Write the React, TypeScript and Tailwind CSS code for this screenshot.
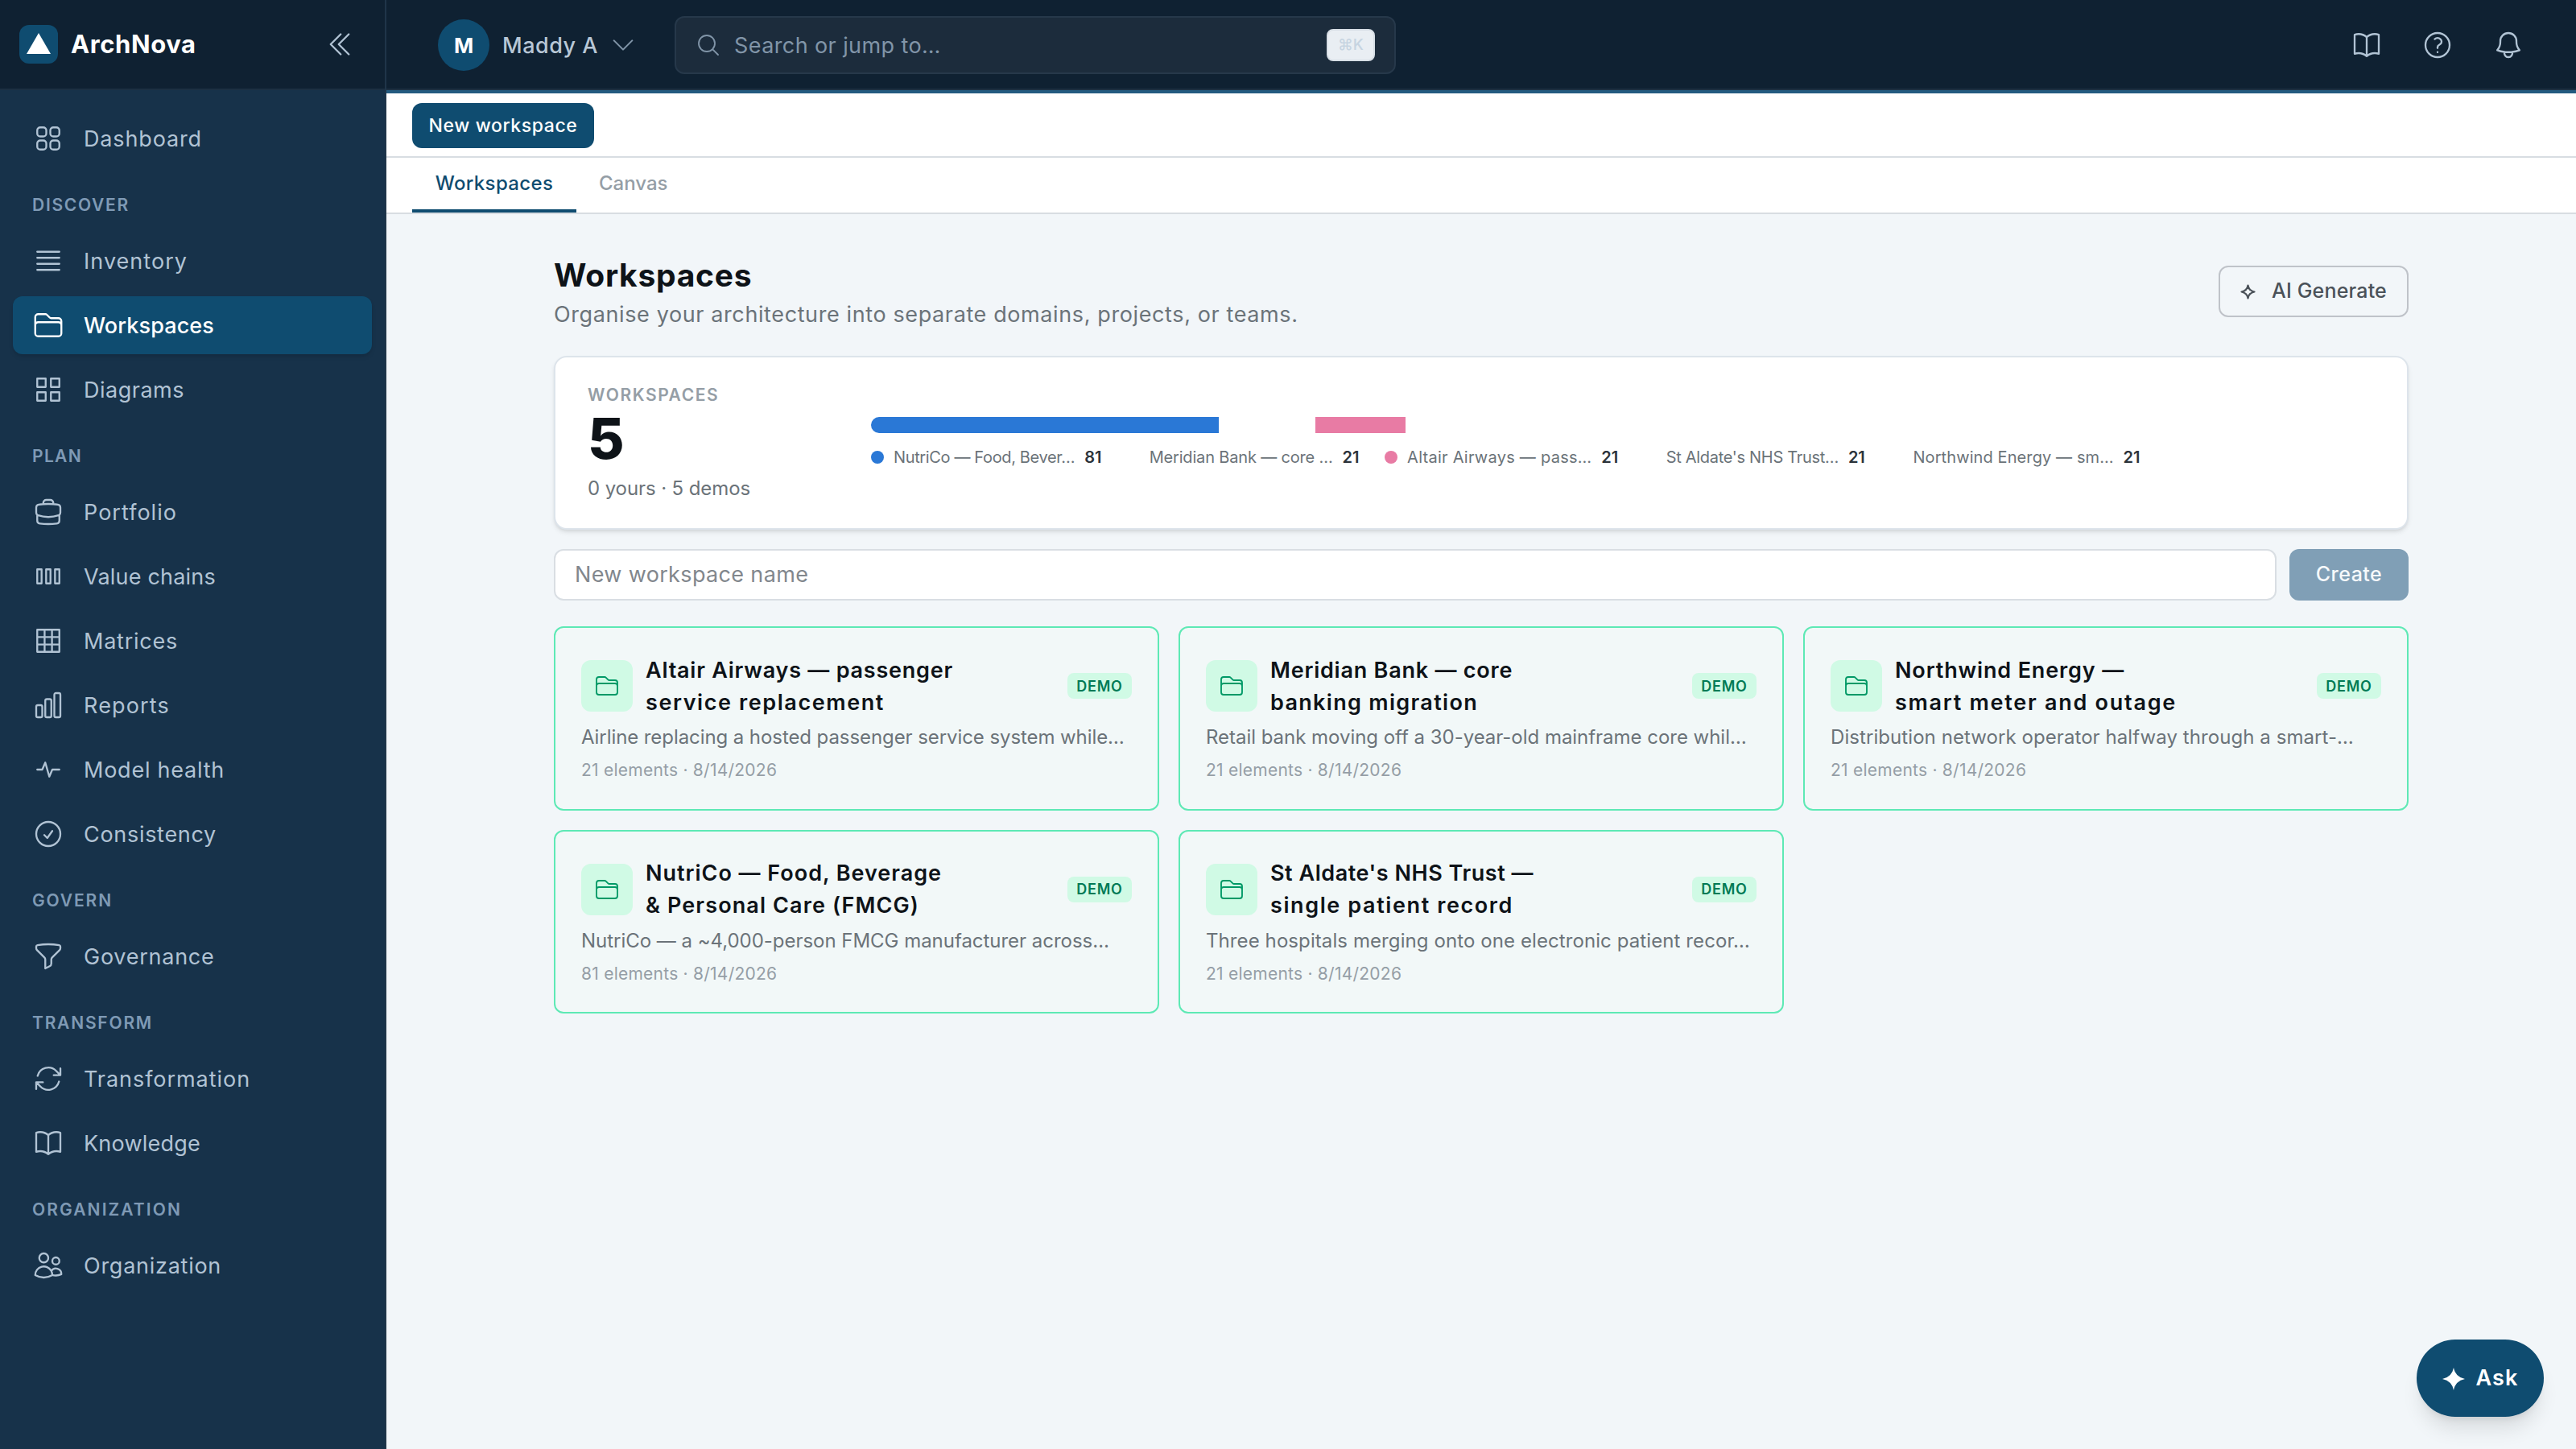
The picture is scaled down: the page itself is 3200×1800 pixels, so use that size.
const icons = {
  collapse: "m18.75 4.5-7.5 7.5 7.5 7.5m-6-15L5.25 12l7.5 7.5",
  dashboard:
    "M3.75 6A2.25 2.25 0 0 1 6 3.75h2.25A2.25 2.25 0 0 1 10.5 6v2.25a2.25 2.25 0 0 1-2.25 2.25H6a2.25 2.25 0 0 1-2.25-2.25V6ZM3.75 15.75A2.25 2.25 0 0 1 6 13.5h2.25a2.25 2.25 0 0 1 2.25 2.25V18a2.25 2.25 0 0 1-2.25 2.25H6A2.25 2.25 0 0 1 3.75 18v-2.25ZM13.5 6a2.25 2.25 0 0 1 2.25-2.25H18A2.25 2.25 0 0 1 20.25 6v2.25A2.25 2.25 0 0 1 18 10.5h-2.25a2.25 2.25 0 0 1-2.25-2.25V6ZM13.5 15.75a2.25 2.25 0 0 1 2.25-2.25H18a2.25 2.25 0 0 1 2.25 2.25V18A2.25 2.25 0 0 1 18 20.25h-2.25A2.25 2.25 0 0 1 13.5 18v-2.25Z",
  inventory: "M3.75 5.25h16.5m-16.5 4.5h16.5m-16.5 4.5h16.5m-16.5 4.5h16.5",
  folder:
    "M2.25 12.75V12A2.25 2.25 0 0 1 4.5 9.75h15A2.25 2.25 0 0 1 21.75 12v.75m-8.69-6.44-2.12-2.12a1.5 1.5 0 0 0-1.061-.44H4.5A2.25 2.25 0 0 0 2.25 6v12a2.25 2.25 0 0 0 2.25 2.25h15A2.25 2.25 0 0 0 21.75 18V9a2.25 2.25 0 0 0-2.25-2.25h-5.379a1.5 1.5 0 0 1-1.06-.44Z",
  diagrams:
    "M3.75 3.75h6.3v6.3h-6.3zM13.95 3.75h6.3v6.3h-6.3zM3.75 13.95h6.3v6.3h-6.3zM13.95 13.95h6.3v6.3h-6.3z",
  portfolio:
    "M20.25 14.15v4.25c0 1.094-.787 2.036-1.872 2.18-2.087.277-4.216.42-6.378.42s-4.291-.143-6.378-.42c-1.085-.144-1.872-1.086-1.872-2.18v-4.25m16.5 0a2.18 2.18 0 0 0 .75-1.661V8.706c0-1.081-.768-2.015-1.837-2.175a48.114 48.114 0 0 0-3.413-.387m4.5 8.006c-.194.165-.42.295-.673.38A23.978 23.978 0 0 1 12 15.75c-2.648 0-5.195-.429-7.577-1.22a2.016 2.016 0 0 1-.673-.38m0 0A2.18 2.18 0 0 1 3 12.489V8.706c0-1.081.768-2.015 1.837-2.175a48.111 48.111 0 0 1 3.413-.387m7.5 0V5.25A2.25 2.25 0 0 0 13.5 3h-3a2.25 2.25 0 0 0-2.25 2.25v.894m7.5 0a48.667 48.667 0 0 0-7.5 0",
  chains: "M3.75 6.75H7v10.5H3.75zM10.375 6.75h3.25v10.5h-3.25zM17 6.75h3.25v10.5H17z",
  matrices: "M3.75 3.75h16.5v16.5H3.75zM3.75 9.25h16.5M3.75 14.75h16.5M9.25 3.75v16.5M14.75 3.75v16.5",
  reports:
    "M3 13.125C3 12.504 3.504 12 4.125 12h2.25c.621 0 1.125.504 1.125 1.125v6.75C7.5 20.496 6.996 21 6.375 21h-2.25A1.125 1.125 0 0 1 3 19.875v-6.75ZM9.75 8.625c0-.621.504-1.125 1.125-1.125h2.25c.621 0 1.125.504 1.125 1.125v11.25c0 .621-.504 1.125-1.125 1.125h-2.25a1.125 1.125 0 0 1-1.125-1.125V8.625ZM16.5 4.125c0-.621.504-1.125 1.125-1.125h2.25C20.496 3 21 3.504 21 4.125v15.75c0 .621-.504 1.125-1.125 1.125h-2.25a1.125 1.125 0 0 1-1.125-1.125V4.125Z",
  health: "M3.75 12h3.75l2.25-5.25 3 10.5L15 12h5.25",
  check: "M9 12.75 11.25 15 15 9.75M21 12a9 9 0 1 1-18 0 9 9 0 0 1 18 0Z",
  funnel:
    "M12 3c2.755 0 5.455.232 8.083.678.533.09.917.556.917 1.096v1.044a2.25 2.25 0 0 1-.659 1.591l-5.432 5.432a2.25 2.25 0 0 0-.659 1.591v2.927a2.25 2.25 0 0 1-1.244 2.013L9.75 21v-6.568a2.25 2.25 0 0 0-.659-1.591L3.659 7.409A2.25 2.25 0 0 1 3 5.818V4.774c0-.54.384-1.006.917-1.096A48.32 48.32 0 0 1 12 3Z",
  refresh:
    "M16.023 9.348h4.992v-.001M2.985 19.644v-4.992m0 0h4.992m-4.993 0 3.181 3.183a8.25 8.25 0 0 0 13.803-3.7M4.031 9.865a8.25 8.25 0 0 1 13.803-3.7l3.181 3.182m0-4.991v4.99",
  book: "M12 6.042A8.967 8.967 0 0 0 6 3.75c-1.052 0-2.062.18-3 .512v14.25A8.987 8.987 0 0 1 6 18c2.305 0 4.408.867 6 2.292m0-14.25a8.966 8.966 0 0 1 6-2.292c1.052 0 2.062.18 3 .512v14.25A8.987 8.987 0 0 0 18 18a8.967 8.967 0 0 0-6 2.292m0-14.25v14.25",
  users:
    "M15 19.128a9.38 9.38 0 0 0 2.625.372 9.337 9.337 0 0 0 4.121-.952 4.125 4.125 0 0 0-7.533-2.493M15 19.128v-.003c0-1.113-.285-2.16-.786-3.07M15 19.128v.106A12.318 12.318 0 0 1 8.624 21c-2.331 0-4.512-.645-6.374-1.766l-.001-.109a6.375 6.375 0 0 1 11.964-3.07M12 6.375a3.375 3.375 0 1 1-6.75 0 3.375 3.375 0 0 1 6.75 0Zm8.25 2.25a2.625 2.625 0 1 1-5.25 0 2.625 2.625 0 0 1 5.25 0Z",
  chevron: "m19.5 8.25-7.5 7.5-7.5-7.5",
  search: "m21 21-5.197-5.197m0 0A7.5 7.5 0 1 0 5.196 5.196a7.5 7.5 0 0 0 10.607 10.607Z",
  help: "M9.879 7.519c1.171-1.025 3.071-1.025 4.242 0 1.172 1.025 1.172 2.687 0 3.712-.203.179-.43.326-.67.442-.745.361-1.45.999-1.45 1.827v.75M21 12a9 9 0 1 1-18 0 9 9 0 0 1 18 0Zm-9 5.25h.008v.008H12v-.008Z",
  bell: "M14.857 17.082a23.848 23.848 0 0 0 5.454-1.31A8.967 8.967 0 0 1 18 9.75V9A6 6 0 0 0 6 9v.75a8.967 8.967 0 0 1-2.312 6.022c1.733.64 3.56 1.085 5.455 1.31m5.714 0a24.255 24.255 0 0 1-5.714 0m5.714 0a3 3 0 1 1-5.714 0",
};

type IconName = keyof typeof icons;

function Icon({ name, className }: { name: IconName; className: string }) {
  return (
    <svg
      className={`shrink-0 ${className}`}
      viewBox="0 0 24 24"
      fill="none"
      stroke="currentColor"
      strokeWidth={1.4}
      strokeLinecap="round"
      strokeLinejoin="round"
    >
      <path d={icons[name]} />
    </svg>
  );
}

type NavItem = {
  label: string;
  icon: IconName;
  tracking: string;
  active?: boolean;
};

const navigation: { title?: string; tracking?: string; items: NavItem[] }[] = [
  {
    items: [{ label: "Dashboard", icon: "dashboard", tracking: "tracking-[0.86px]" }],
  },
  {
    title: "DISCOVER",
    tracking: "tracking-[1.73px]",
    items: [
      { label: "Inventory", icon: "inventory", tracking: "tracking-[1.04px]" },
      { label: "Workspaces", icon: "folder", tracking: "tracking-[0.12px]", active: true },
      { label: "Diagrams", icon: "diagrams", tracking: "tracking-[0.5px]" },
    ],
  },
  {
    title: "PLAN",
    tracking: "tracking-[1.34px]",
    items: [
      { label: "Portfolio", icon: "portfolio", tracking: "tracking-[1.03px]" },
      { label: "Value chains", icon: "chains", tracking: "tracking-[0.2px]" },
      { label: "Matrices", icon: "matrices", tracking: "tracking-[0.76px]" },
      { label: "Reports", icon: "reports", tracking: "tracking-[1.16px]" },
      { label: "Model health", icon: "health", tracking: "tracking-[0.76px]" },
      { label: "Consistency", icon: "check", tracking: "tracking-[0.7px]" },
    ],
  },
  {
    title: "GOVERN",
    tracking: "tracking-[1.88px]",
    items: [{ label: "Governance", icon: "funnel", tracking: "tracking-[0.75px]" }],
  },
  {
    title: "TRANSFORM",
    tracking: "tracking-[1.78px]",
    items: [
      { label: "Transformation", icon: "refresh", tracking: "tracking-[0.95px]" },
      { label: "Knowledge", icon: "book", tracking: "tracking-[0.22px]" },
    ],
  },
  {
    title: "ORGANIZATION",
    tracking: "tracking-[2.09px]",
    items: [{ label: "Organization", icon: "users", tracking: "tracking-[0.74px]" }],
  },
];

const shares = [
  { label: "NutriCo — Food, Bever…", count: 81, color: "bg-[#2a78d6]", tracking: "tracking-[-0.36px]" },
  { label: "Meridian Bank — core …", count: 21, color: "bg-transparent", tracking: "tracking-[-0.17px]" },
  { label: "Altair Airways — pass…", count: 21, color: "bg-[#e87ba4]", tracking: "tracking-[0.25px]" },
  { label: "St Aldate's NHS Trust…", count: 21, color: "bg-transparent", tracking: "tracking-[-0.31px]" },
  { label: "Northwind Energy — sm…", count: 21, color: "bg-transparent", tracking: "tracking-[0.1px]" },
];

const total = shares.reduce((sum, share) => sum + share.count, 0);

const workspaces = [
  {
    title: [
      { line: "Altair Airways — passenger", tracking: "tracking-[0.77px]" },
      { line: "service replacement", tracking: "tracking-[1.58px]" },
    ],
    text: "Airline replacing a hosted passenger service system while…",
    tracking: "tracking-[-0.08px]",
    count: 21,
  },
  {
    title: [
      { line: "Meridian Bank — core", tracking: "tracking-[0.77px]" },
      { line: "banking migration", tracking: "tracking-[1.32px]" },
    ],
    text: "Retail bank moving off a 30-year-old mainframe core whil…",
    tracking: "tracking-[-0.03px]",
    count: 21,
  },
  {
    title: [
      { line: "Northwind Energy —", tracking: "tracking-[0.85px]" },
      { line: "smart meter and outage", tracking: "tracking-[1.73px]" },
    ],
    text: "Distribution network operator halfway through a smart-…",
    tracking: "tracking-[0.07px]",
    count: 21,
  },
  {
    title: [
      { line: "NutriCo — Food, Beverage", tracking: "tracking-[0.98px]" },
      { line: "& Personal Care (FMCG)", tracking: "tracking-[1.12px]" },
    ],
    text: "NutriCo — a ~4,000-person FMCG manufacturer across…",
    tracking: "tracking-[-0.03px]",
    count: 81,
  },
  {
    title: [
      { line: "St Aldate's NHS Trust —", tracking: "tracking-[0.54px]" },
      { line: "single patient record", tracking: "tracking-[1.6px]" },
    ],
    text: "Three hospitals merging onto one electronic patient recor…",
    tracking: "tracking-[0.09px]",
    count: 21,
  },
];

function Sidebar() {
  return (
    <aside className="flex w-[480px] shrink-0 flex-col border-r-2 border-[#1f3549] bg-[#17324a]">
      <div className="flex h-28 items-center border-b-2 border-[#1c3042] bg-[#0f2132] pr-9 pl-6">
        <div className="flex size-12 items-center justify-center rounded-xl bg-[#0f4c70]">
          <svg className="size-[30px]" viewBox="0 0 30 30">
            <path d="M15 1 30 27H0z" fill="#fff" />
          </svg>
        </div>
        <span className="ml-4 text-[31px] font-bold tracking-[0.6px] text-white">
          ArchNova
        </span>
        <Icon name="collapse" className="ml-auto size-10 text-[#b1c3d4]" />
      </div>
      <nav className="px-4 pt-6">
        {navigation.map(({ title, tracking, items }, index) => (
          <div key={index}>
            {title && (
              <div className="flex h-20 items-center px-6 pt-3.5 text-[21px] font-semibold text-[#7f9ab5]">
                <span className={tracking}>{title}</span>
              </div>
            )}
            <div className="flex flex-col gap-2">
              {items.map((item) => (
                <a
                  key={item.label}
                  className={
                    item.active
                      ? "flex h-[72px] w-[446px] items-center rounded-xl bg-[#0f4c70] px-6 font-medium text-white shadow-md"
                      : "flex h-[72px] w-[446px] items-center px-6 text-[#b1c3d4]"
                  }
                >
                  <Icon name={item.icon} className="size-10" />
                  <span className={`ml-6 pt-0.5 text-[27px] ${item.tracking}`}>
                    {item.label}
                  </span>
                </a>
              ))}
            </div>
          </div>
        ))}
      </nav>
    </aside>
  );
}

function Topbar() {
  return (
    <header className="shrink-0 border-b-4 border-[#245b80] bg-[#0f2132]">
      <div className="flex h-28 items-center border-b-2 border-[#1c3042] px-16 pt-0.5">
        <div className="flex w-[294px] items-center">
          <div className="flex size-16 items-center justify-center rounded-full bg-[#0f4c70] text-[26px] font-bold text-white">
            M
          </div>
          <span className="ml-4 pt-0.5 text-[27px] font-medium tracking-[0.51px] text-[#b8c7d6]">
            Maddy A
          </span>
          <Icon name="chevron" className="ml-[13px] size-9 text-[#8195a8]" />
        </div>
        <div className="flex h-[72px] w-[896px] items-center rounded-xl border-2 border-[#26384a] bg-[#1c2c3c] px-6">
          <Icon name="search" className="size-8 text-[#8195a8]" />
          <span className="ml-4 pt-0.5 text-[27px] tracking-[0.4px] text-[#8195a8]">
            Search or jump to…
          </span>
          <kbd className="ml-auto flex h-10 w-[60px] items-center justify-center rounded-lg border-2 border-[#d8dfe6] bg-[#e9eef3] font-['Inter','DejaVu_Sans',sans-serif] text-[19px] font-medium text-[#c6d4e1]">
            ⌘K
          </kbd>
        </div>
        <div className="ml-auto flex gap-12 text-[#b1c3d4]">
          <Icon name="book" className="size-10" />
          <Icon name="help" className="size-10" />
          <Icon name="bell" className="size-10" />
        </div>
      </div>
    </header>
  );
}

function Summary() {
  return (
    <section className="flex h-[216px] items-start rounded-2xl border-2 border-[#dde4eb] bg-white pt-[33px] pl-10 shadow-md">
      <div className="w-[352px]">
        <p className="text-[21px] leading-7 font-semibold tracking-[1.6px] text-[#959ea6]">
          WORKSPACES
        </p>
        <p className="mt-1 text-[70px] leading-[72px] font-extrabold text-[#0e1318]">
          5
        </p>
        <p className="mt-2 text-[24px] leading-9 tracking-[-0.1px] text-[#6b7379]">
          0 yours · 5 demos
        </p>
      </div>
      <div className="pt-[41px]">
        <div className="flex h-5 w-[896px] gap-1 overflow-hidden rounded-full">
          {shares.map(({ label, count, color }) => (
            <div
              key={label}
              className={color}
              style={{ width: (count / total) * 880 }}
            />
          ))}
        </div>
        <div className="mt-3.5 flex gap-8 text-[20px] leading-8">
          {shares.map(({ label, count, color, tracking }) => (
            <div key={label} className="flex items-center">
              <span className={`mr-3 size-4 rounded-full ${color}`} />
              <span className={`text-[#6b7379] ${tracking}`}>{label}</span>
              <span className="ml-3 w-[20.5px] font-semibold text-[#2c333a]">
                {count}
              </span>
            </div>
          ))}
        </div>
      </div>
    </section>
  );
}

export default function App() {
  return (
    <div className="relative flex h-[1800px] w-[3200px] overflow-hidden bg-[#f2f6f9] font-['Inter',sans-serif]">
      <Sidebar />
      <div className="flex min-w-0 flex-1 flex-col">
        <Topbar />
        <div className="flex h-20 shrink-0 items-center border-b-2 border-[#d8dde2] bg-white px-8 pt-0.5">
          <button className="h-14 w-[226px] rounded-xl bg-[#0f4c70] text-[23px] font-medium tracking-[0.6px] text-white">
            New workspace
          </button>
        </div>
        <div className="flex h-[70px] shrink-0 border-b-2 border-[#d8dde2] bg-white px-8 text-[24px] font-medium">
          <div className="flex w-[204px] items-center justify-center border-b-4 border-[#0f4c70] tracking-[0.35px] text-[#0f4c70]">
            Workspaces
          </div>
          <div className="flex items-center px-7 pb-1 tracking-[0px] text-[#959ea6]">
            Canvas
          </div>
        </div>

        <main className="mx-auto flex w-[2304px] flex-col pt-12">
          <div className="flex h-32 justify-between">
            <div>
              <h1 className="mt-1 text-[39px] leading-[48px] font-bold tracking-[0.72px] text-[#0e1318]">
                Workspaces
              </h1>
              <p className="mt-[5px] text-[27px] leading-10 tracking-[0.61px] text-[#6b7379]">
                Organise your architecture into separate domains, projects, or
                teams.
              </p>
            </div>
            <button className="mt-4 flex h-16 w-[236px] items-center rounded-xl border-2 border-[#bfc3c9] pl-[25px] text-[25px] font-medium tracking-[0.18px] text-[#4b5259]">
              <svg
                className="mr-5 size-[19px]"
                viewBox="0 0 19 19"
                fill="none"
                stroke="currentColor"
                strokeWidth={2.2}
                strokeLinejoin="round"
              >
                <path d="M9.5 1.5q1 6.500 8 8-7 1.500-8 8-1-6.500-8-8 7-1.500 8-8z" />
              </svg>
              AI Generate
            </button>
          </div>

          <Summary />

          <div className="mt-6 flex gap-4">
            <div className="flex h-16 flex-1 items-center rounded-xl border-2 border-[#d9dee3] bg-white px-6 pt-px text-[27px] tracking-[0.35px] text-[#82878d]">
              New workspace name
            </div>
            <button className="h-16 w-[148px] rounded-xl bg-[#809fb6] text-[25px] font-medium tracking-[0.5px] text-[#f6f9fb]">
              Create
            </button>
          </div>

          <div className="mt-8 grid grid-cols-3 gap-6">
            {workspaces.map(({ title, text, tracking, count }) => (
              <article
                key={text}
                className="h-[228.5px] rounded-xl border-2 border-[#5ee9b5] bg-[#f2f8f8] p-8"
              >
                <div className="flex h-20 items-center">
                  <div className="flex size-16 items-center justify-center rounded-xl bg-[#d0fae5] text-[#009966]">
                    <Icon name="folder" className="size-8" />
                  </div>
                  <h2 className="ml-4 pt-px text-[27px] leading-10 font-semibold text-[#0e1318]">
                    {title.map(({ line, tracking }) => (
                      <span key={line} className={`block ${tracking}`}>
                        {line}
                      </span>
                    ))}
                  </h2>
                  <span className="ml-auto flex h-8 w-20 items-center justify-center rounded-lg bg-[#d0fae5] text-[18px] font-semibold tracking-[0.8px] text-[#007a55]">
                    DEMO
                  </span>
                </div>
                <p
                  className={`mt-1 text-[24px] leading-10 whitespace-nowrap text-[#6b7379] ${tracking}`}
                >
                  {text}
                </p>
                <p className="mt-px text-[21px] leading-10 tracking-[0.24px] text-[#959ea6]">
                  {count} elements · 8/14/2026
                </p>
              </article>
            ))}
          </div>
        </main>
      </div>

      <button className="absolute right-10 bottom-10 flex h-24 w-[158px] items-center justify-center gap-3.5 rounded-full bg-[#0f4c70] pt-px text-[27px] font-semibold tracking-[1.11px] text-white shadow-xl">
        <svg className="size-[28px]" viewBox="0 0 28 28" fill="currentColor">
          <path d="M14 0q2 11.500 14 14-12 2.500-14 14-2-11.500-14-14 12-2.500 14-14z" />
        </svg>
        Ask
      </button>
    </div>
  );
}
